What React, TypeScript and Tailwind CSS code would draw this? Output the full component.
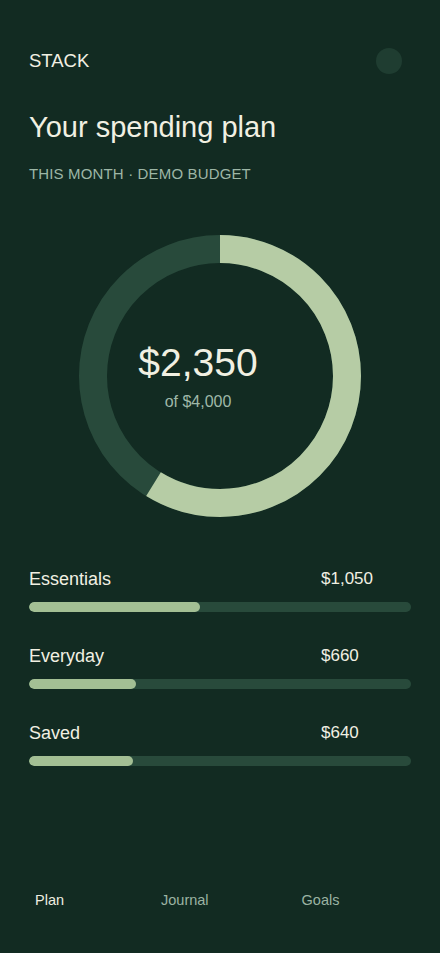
import React from "react";

const rows = [
  { label: "Essentials", value: "$1,050", pct: 1050 / 2350 },
  { label: "Everyday", value: "$660", pct: 660 / 2350 },
  { label: "Saved", value: "$640", pct: 640 / 2350 },
];

function Donut() {
  const r = 127;
  const c = 2 * Math.PI * r;
  const p = 2350 / 4000;
  return (
    <div className="relative w-[282px] h-[282px]">
      <svg width="282" height="282" viewBox="0 0 282 282">
        <circle cx="141" cy="141" r={r} fill="none" stroke="#284a3b" strokeWidth="28" />
        <circle
          cx="141"
          cy="141"
          r={r}
          fill="none"
          stroke="#b6cca5"
          strokeWidth="28"
          strokeDasharray={`${c * p} ${c}`}
          transform="rotate(-90 141 141)"
        />
      </svg>
      <div className="absolute inset-0 flex flex-col items-center justify-center pr-[44px]">
        <div className="text-[39px] leading-[46px] text-[#f1f0e2]">$2,350</div>
        <div className="text-[16px] leading-[20px] text-[#9fb8a8] mt-[6px]">of $4,000</div>
      </div>
    </div>
  );
}

export default function App() {
  return (
    <div
      className="w-[440px] h-[953px] bg-[#122b22] flex flex-col text-[#f1f0e2]"
      style={{ fontFamily: '"Liberation Sans", Arial, sans-serif' }}
    >
      <div className="px-[29px] pt-[48px]">
        <div className="flex items-center justify-between h-[26px]">
          <div className="text-[18.5px] leading-none text-[#f1f0e2]">STACK</div>
          <div className="w-[26px] h-[26px] rounded-full bg-[#1f3d31] mr-[9px]" />
        </div>
        <h1 className="mt-[36px] text-[29px] leading-[35px] text-[#f1f0e2]">Your spending plan</h1>
        <div className="mt-[20px] text-[15px] leading-[18px] tracking-[0.01em] text-[#9db6a6] uppercase">This month · Demo budget</div>
        <div className="mt-[52px] flex justify-center">
          <Donut />
        </div>
        <div className="mt-[51px] flex flex-col gap-[33px]">
          {rows.map((row) => (
            <div key={row.label}>
              <div className="grid grid-cols-[292px_1fr] items-center h-[22px]">
                <div className="text-[18px] leading-[22px] text-[#f1f0e2]">{row.label}</div>
                <div className="text-[17px] leading-[22px] text-[#f1f0e2]">{row.value}</div>
              </div>
              <div className="mt-[12px] h-[10px] rounded-full bg-[#284a3b] overflow-hidden">
                <div className="h-full rounded-full bg-[#a3bf94]" style={{ width: `${row.pct * 100}%` }} />
              </div>
            </div>
          ))}
        </div>
      </div>
      <div className="flex-1" />
      <nav className="flex pl-[35px] pb-[44px] text-[14.5px] leading-[18px]">
        <span className="text-[#eeeee0]">Plan</span>
        <span className="ml-[97px] text-[#9bb3a3]">Journal</span>
        <span className="ml-[93px] text-[#9bb3a3]">Goals</span>
      </nav>
    </div>
  );
}
